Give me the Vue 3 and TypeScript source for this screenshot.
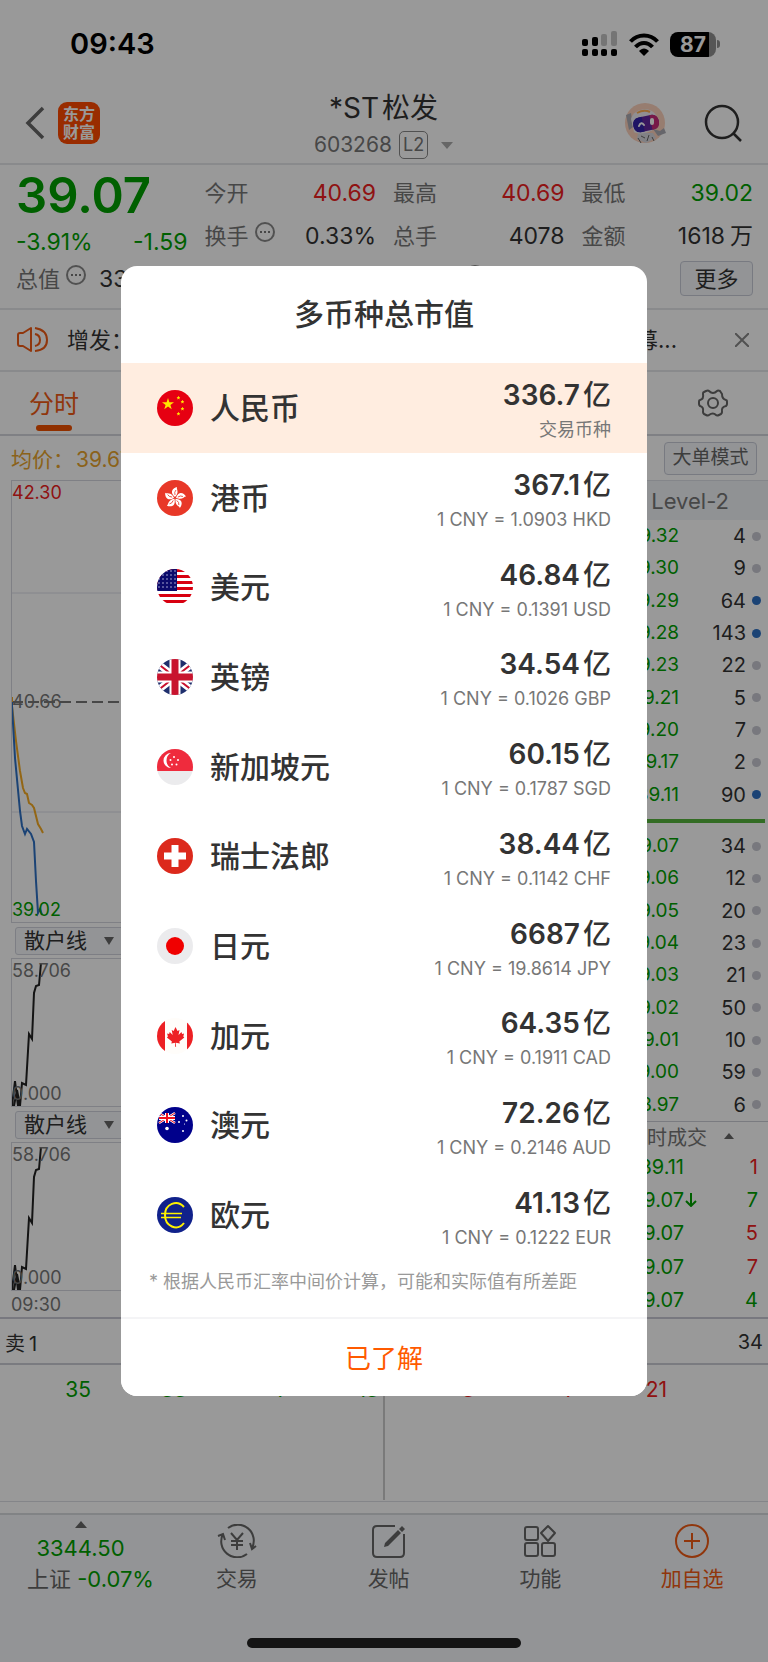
<script setup lang="ts">
interface Currency {
  code: string
  name: string
  value: string
  note: string
}
interface Level {
  price: string
  qty: number
  big?: boolean
}
interface Trade {
  price: string
  arrow?: boolean
  qty: number
  side: 'up' | 'down'
}

const currencies: Currency[] = [
  { code: 'CNY', name: '人民币', value: '336.7', note: '交易币种' },
  { code: 'HKD', name: '港币', value: '367.1', note: '1 CNY = 1.0903 HKD' },
  { code: 'USD', name: '美元', value: '46.84', note: '1 CNY = 0.1391 USD' },
  { code: 'GBP', name: '英镑', value: '34.54', note: '1 CNY = 0.1026 GBP' },
  { code: 'SGD', name: '新加坡元', value: '60.15', note: '1 CNY = 0.1787 SGD' },
  { code: 'CHF', name: '瑞士法郎', value: '38.44', note: '1 CNY = 0.1142 CHF' },
  { code: 'JPY', name: '日元', value: '6687', note: '1 CNY = 19.8614 JPY' },
  { code: 'CAD', name: '加元', value: '64.35', note: '1 CNY = 0.1911 CAD' },
  { code: 'AUD', name: '澳元', value: '72.26', note: '1 CNY = 0.2146 AUD' },
  { code: 'EUR', name: '欧元', value: '41.13', note: '1 CNY = 0.1222 EUR' },
]

const asks: Level[] = [
  { price: '39.32', qty: 4 },
  { price: '39.30', qty: 9 },
  { price: '39.29', qty: 64, big: true },
  { price: '39.28', qty: 143, big: true },
  { price: '39.23', qty: 22 },
  { price: '39.21', qty: 5 },
  { price: '39.20', qty: 7 },
  { price: '39.17', qty: 2 },
  { price: '39.11', qty: 90, big: true },
]
const bids: Level[] = [
  { price: '39.07', qty: 34 },
  { price: '39.06', qty: 12 },
  { price: '39.05', qty: 20 },
  { price: '39.04', qty: 23 },
  { price: '39.03', qty: 21 },
  { price: '39.02', qty: 50 },
  { price: '39.01', qty: 10 },
  { price: '39.00', qty: 59 },
  { price: '38.97', qty: 6 },
]
const books = [asks, bids]

const trades: Trade[] = [
  { price: '39.11', qty: 1, side: 'up' },
  { price: '39.07', arrow: true, qty: 7, side: 'down' },
  { price: '39.07', qty: 5, side: 'up' },
  { price: '39.07', qty: 7, side: 'up' },
  { price: '39.07', qty: 4, side: 'down' },
]

const queue = ['35', '33', '1', '13', '3', '1', '21', '']
const petals = [0, 72, 144, 216, 288]
const starRows = [2, 6, 10, 14, 18]
const starCols = [2, 6, 10, 14, 18]
const usStripes = [0, 6, 12, 18, 25, 31]
</script>

<template>
  <div class="app">
    <div class="page">
      <div class="status">
        <span class="clock">09:43</span>
        <div class="status-icons">
          <svg width="36" height="26" viewBox="0 0 36 26">
            <g fill="#000">
              <rect x="0" y="8" width="6" height="7" rx="2" /><rect x="10" y="6" width="6" height="9" rx="2" />
              <rect x="0" y="18" width="6" height="7" rx="2" /><rect x="10" y="18" width="6" height="7" rx="2" />
              <rect x="19" y="18" width="6" height="7" rx="2" /><rect x="29" y="18" width="6" height="7" rx="2" />
            </g>
            <g fill="#c4c4c4">
              <rect x="19" y="3" width="6" height="12" rx="2" /><rect x="29" y="0" width="6" height="15" rx="2" />
            </g>
          </svg>
          <svg width="30" height="23" viewBox="0 0 30 23" fill="none" stroke="#000" stroke-width="4">
            <path d="M1.500 8.500C9 .5 21 .5 28.500 8.500" /><path d="M6.500 14C11.500 8.500 18.500 8.500 23.500 14" />
            <path d="M10 18c3-3.500 7-3.500 10 0l-5 5z" fill="#000" stroke="none" />
          </svg>
          <div class="power"><div class="battery"><span>87</span></div><i class="nub" /></div>
        </div>
      </div>

      <header class="top">
        <div class="top-left">
          <button class="plain" aria-label="返回">
            <svg width="20" height="34" viewBox="0 0 20 34" fill="none" stroke="#666" stroke-width="3.500"><path d="M18 2 3 17l15 15" /></svg>
          </button>
          <div class="logo"><span>东方</span><span>财富</span></div>
        </div>
        <div class="top-title">
          <h1>*ST<span>松发</span></h1>
          <div class="code">
            <span>603268</span><span class="l2">L2</span>
            <svg width="12" height="7" viewBox="0 0 12 7"><path d="M0 0h12L6 7z" fill="#aaa" /></svg>
          </div>
        </div>
        <div class="top-right">
          <button class="plain" aria-label="助手">
            <svg width="42" height="42" viewBox="0 0 42 42">
              <circle cx="20" cy="21" r="20" fill="#fcd0bb" />
              <path d="M13 31h15l3 5-10 5-9-4z" fill="#d8d8de" />
              <path d="M16 34l4 2m4-3-2 6m-9-3 3 5m11-6 2 4" stroke="#666" stroke-width="1" />
              <path d="M1 13l5-2 2 14-4 3zM28 27l7 2 4-3 2 5-8 3z" fill="#aaaab2" />
              <path d="M6 17C8 7 25 3 31 13l2 8c0 8-18 13-24 9z" fill="#f0eff3" />
              <path d="M12 11q7-4 13-1" fill="none" stroke="#ffb052" stroke-width="2" />
              <g transform="rotate(-12 21 21)">
                <rect x="8" y="14" width="26" height="15" rx="7" fill="#62259e" />
                <path d="M15 14h3v15h-3q-7 0-7-7.500T15 14z" fill="#3222a8" /><path d="M26 14h1q7 0 7 7.500T27 29h-1z" fill="#c62878" />
              </g>
              <path d="M14 24q2-5 5-1" fill="none" stroke="#fff" stroke-width="2" stroke-linecap="round" />
              <rect x="25" y="16" width="4" height="7" rx="2" fill="#fff" />
            </svg>
          </button>
          <button class="plain" aria-label="搜索">
            <svg width="38" height="38" viewBox="0 0 38 38" fill="none" stroke="#333" stroke-width="2.500"><circle cx="18" cy="18" r="16" /><path d="M29 29l8 8" /></svg>
          </button>
        </div>
      </header>

      <section class="quote">
        <div class="price">
          <strong>39.07</strong>
          <div class="change"><span>-3.91%</span><span>-1.59</span></div>
        </div>
        <div class="cell"><span class="label">今开</span><span class="up">40.69</span></div>
        <div class="cell"><span class="label">最高</span><span class="up">40.69</span></div>
        <div class="cell"><span class="label">最低</span><span class="down">39.02</span></div>
        <div class="cell">
          <span class="label">换手<i class="more-dot"><b /><b /><b /></i></span><span>0.33%</span>
        </div>
        <div class="cell"><span class="label">总手</span><span>4078</span></div>
        <div class="cell"><span class="label">金额</span><span class="unit">1618<em>万</em></span></div>
        <div class="cell cap">
          <span class="label">总值<i class="more-dot"><b /><b /><b /></i></span><span>336.7亿</span>
        </div>
        <div class="cell third"><span class="label">市盈动<i class="more-dot"><b /><b /><b /></i></span></div>
        <div class="cell last"><button class="chip">更多</button></div>
      </section>

      <section class="news">
        <svg width="32" height="28" viewBox="0 0 32 28" fill="none" stroke="#f05a14" stroke-width="2" stroke-linejoin="round">
          <path d="M14 2v23L6 20H3q-2 0-2-2V9q0-2 2-2h3z" /><path d="M18 8q5 1 5 6t-5 6M18 2q12 2 12 12T18 25" />
        </svg>
        <div class="news-text"><span>增发：</span><span>募...</span></div>
        <button class="plain" aria-label="关闭">
          <svg width="14" height="14" viewBox="0 0 14 14" stroke="#888" stroke-width="2"><path d="M0 0l14 14M14 0 0 14" /></svg>
        </button>
      </section>

      <nav class="tabs">
        <button class="plain tab">分时</button>
        <button class="plain" aria-label="设置">
          <svg width="30" height="30" viewBox="0 0 30 30" fill="none" stroke="#666" stroke-width="2" stroke-linejoin="round">
            <path d="M8 3q2-1 3 0 4 4 8 0 1-1 3 0l2 3q0 5 4 6 1 0 1 2v2q0 1-1 2-5 1-4 6 0 1-1 2l-2 1q-2 1-3 0-3-3-7 0-1 1-3 0l-2-1q-1-1-1-2 1-5-3-6-1-1-1-2v-2q0-2 1-2 4-1 3-6 0-2 1-2z" /><circle cx="15" cy="15" r="5" />
          </svg>
        </button>
      </nav>

      <section class="average">
        <div class="avg-text"><span>均价：</span><span>39.67</span></div>
        <button class="chip small">大单模式</button>
      </section>

      <section class="market">
        <div class="charts">
          <div class="chart main-chart">
            <svg width="100%" height="100%" fill="none">
              <g stroke="#dcdfe8" stroke-width="1"><line x1="0" x2="100%" y1="112" y2="112" /><line x1="0" x2="100%" y1="331" y2="331" /></g>
              <line x1="0" x2="100%" y1="221" y2="221" stroke="#777" stroke-width="2" stroke-dasharray="11 5" />
              <path d="M0 216v9l4 35 4 30 3 17 2 5 2 1 2 9 3 2 2 3 4 16 3 5 2 4" stroke="#f5ab23" stroke-width="2" />
              <path d="M0 221v4l3 52 5 53 2 15 3 8 2-5 4 5 3 8 2 39 2 32 2-4 2 6" stroke="#2d70c4" stroke-width="2" />
            </svg>
            <span class="tag hi">42.30</span><span class="tag mid">40.66</span><span class="tag lo">39.02</span>
          </div>
          <template v-for="n in 2" :key="n">
            <button class="indicator"><span>散户线</span><svg width="10" height="8" viewBox="0 0 10 8"><path d="M0 0h10L5 8z" fill="#666" /></svg></button>
            <div class="chart sub-chart">
              <svg width="100%" height="100%" fill="none" stroke="#222" stroke-width="2">
                <path d="M0 147l3-25 3 25h2l2-23 4 2 3-51 3 5 2-46 2-7 3-1 2-22M2 147l3-16 3 16" />
              </svg>
              <span class="tag hi">58.706</span><span class="tag lo">0.000</span>
            </div>
          </template>
          <div class="axis">09:30</div>
        </div>

        <div class="book">
          <div class="book-head">Level-2</div>
          <template v-for="(levels, b) in books" :key="b">
            <div v-if="b === 1" class="split" />
            <table class="levels">
              <tbody>
                <tr v-for="l in levels" :key="l.price">
                  <td class="down">{{ l.price }}</td><td class="qty">{{ l.qty }}</td>
                  <td class="dot-cell"><i class="dot" :class="{ big: l.big }" /></td>
                </tr>
              </tbody>
            </table>
          </template>
          <div class="trade-head"><span>分时成交</span><svg width="10" height="6" viewBox="0 0 10 6"><path d="M5 0l5 6H0z" fill="#666" /></svg></div>
          <table class="trades">
            <tbody>
              <tr v-for="(t, i) in trades" :key="i">
                <td class="down">{{ t.price }}</td>
                <td class="arrow"><svg v-if="t.arrow" width="12" height="14" viewBox="0 0 12 14" fill="none" stroke="#00a000" stroke-width="2"><path d="M6 0v13M1 8l5 5 5-5" /></svg></td>
                <td class="qty" :class="t.side">{{ t.qty }}</td>
              </tr>
            </tbody>
          </table>
        </div>
      </section>

      <section class="sell"><span>卖<em>1</em></span><span>34</span></section>
      <section class="queue">
        <span v-for="(q, i) in queue" :key="i" :class="i < 4 ? 'down' : 'up'">{{ q }}</span>
      </section>

      <footer class="dock">
        <div class="dock-items">
          <button class="plain index">
            <svg width="12" height="7" viewBox="0 0 12 7"><path d="M6 0l6 7H0z" fill="#666" /></svg>
            <span class="down">3344.50</span>
            <span class="index-name">上证 <span class="down">-0.07%</span></span>
          </button>
          <button class="plain item">
            <svg width="40" height="34" viewBox="0 0 40 34" fill="none" stroke="#666" stroke-width="2">
              <path d="M11 4A16 16 0 0 1 35 24M30 30A16 16 0 0 1 6 10M1 12l5-2 2 6M39 22l-4 3-2-6M14 9l6 7 6-7M20 16v10M14 17h12M14 21h12" />
            </svg>
            <span>交易</span>
          </button>
          <button class="plain item">
            <svg width="34" height="34" viewBox="0 0 34 34" fill="none" stroke="#666" stroke-width="2">
              <path d="M23 2H5Q1 2 1 6v23q0 4 4 4h23q4 0 4-4V10" /><path d="M12 23l4-1L29 9l-3-3-13 13zM27 5l3 3 3-3-3-3z" fill="#666" stroke="none" />
            </svg>
            <span>发帖</span>
          </button>
          <button class="plain item">
            <svg width="34" height="34" viewBox="0 0 34 34" fill="none" stroke="#666" stroke-width="2" stroke-linejoin="round">
              <rect x="2" y="3" width="13" height="13" rx="2" /><rect x="2" y="19" width="13" height="13" rx="2" /><rect x="19" y="19" width="13" height="13" rx="2" /><path d="M25 2l7 7-7 8-7-8z" />
            </svg>
            <span>功能</span>
          </button>
          <button class="plain item add">
            <svg width="34" height="34" viewBox="0 0 34 34" fill="none" stroke="#f05a14" stroke-width="2"><circle cx="17" cy="17" r="16" /><path d="M17 9v16M9 17h16" /></svg>
            <span>加自选</span>
          </button>
        </div>
        <div class="home-bar" />
      </footer>
    </div>

    <div class="overlay">
      <div class="modal" role="dialog" aria-labelledby="modal-title">
        <h2 id="modal-title">多币种总市值</h2>
        <ul class="currencies">
          <li v-for="(c, i) in currencies" :key="c.code" :class="{ active: i === 0 }">
            <svg class="flag" width="36" height="36" viewBox="0 0 36 36">
              <g v-if="c.code === 'CNY'">
                <rect width="36" height="36" fill="#e60012" />
                <g fill="#ffe600">
                  <path d="M11 8l1.400 4.200h4.600l-3.600 2.700 1.300 4.300-3.700-2.600-3.700 2.600 1.300-4.300L5 12.200h4.600z" />
                  <path id="cn-star" d="M21.500 5.800l.6 1.200 1.200.2-.9.900.2 1.300-1.100-.6-1.200.6.200-1.300-.9-.9 1.300-.2z" />
                  <use href="#cn-star" x="4" y="4" /><use href="#cn-star" x="4" y="11" /><use href="#cn-star" y="16" />
                </g>
              </g>
              <g v-else-if="c.code === 'HKD'">
                <rect width="36" height="36" fill="#e83828" />
                <g v-for="a in petals" :key="a" :transform="`rotate(${a} 18 18)`">
                  <path d="M18 17C12 12 16 8 20 7c-1 2 3 5-2 10z" fill="#fff" /><path d="M18 15q-1-3 1-5" fill="none" stroke="#e83828" stroke-width=".8" />
                </g>
              </g>
              <g v-else-if="c.code === 'USD'">
                <rect width="36" height="36" fill="#fff" />
                <rect v-for="y in usStripes" :key="y" :y="y" width="36" height="3" fill="#d80010" />
                <rect width="20" height="22" fill="#0b0a6b" />
                <template v-for="y in starRows" :key="y"><circle v-for="x in starCols" :key="x" :cx="x" :cy="y + (x % 4 ? 0 : 2)" r=".7" fill="#dcdcf4" /></template>
              </g>
              <g v-else-if="c.code === 'GBP'">
                <rect width="36" height="36" fill="#1f2f6d" />
                <path d="M0 4l36 28M36 4L0 32" stroke="#fff" stroke-width="7" /><path d="M0 4l36 28M36 4L0 32" stroke="#c8102e" stroke-width="2" />
                <path d="M18 0v36M0 18h36" stroke="#fff" stroke-width="11" /><path d="M18 0v36M0 18h36" stroke="#c8142e" stroke-width="7" />
              </g>
              <g v-else-if="c.code === 'SGD'">
                <rect width="36" height="36" fill="#ebebed" /><rect width="36" height="22" fill="#ef2b3d" />
                <path d="M14 4a7.500 7.500 0 1 0 0 15 8.500 8.500 0 0 1 0-15z" fill="#fff" />
                <g fill="#fff"><circle cx="17" cy="8" r="1" /><circle cx="13.500" cy="11" r="1" /><circle cx="21" cy="11" r="1" /><circle cx="15" cy="15.500" r="1" /><circle cx="19.500" cy="15.500" r="1" /></g>
              </g>
              <g v-else-if="c.code === 'CHF'">
                <rect width="36" height="36" fill="#dc291c" /><path d="M18 7v22M7 18h22" stroke="#fff" stroke-width="7" />
              </g>
              <g v-else-if="c.code === 'JPY'"><rect width="36" height="36" fill="#ebebed" /><circle cx="18" cy="18" r="9" fill="#f00000" /></g>
              <g v-else-if="c.code === 'CAD'">
                <rect width="36" height="36" fill="#fffdfa" /><rect width="8" height="36" fill="#ed2024" /><rect x="30" width="6" height="36" fill="#ed2024" />
                <path d="M18.500 9l2 4 2-1-1 5 3-3 .6 2 2-.4-.8 3 1 .8-5 4 .6 2-4-.6.200 4h-1l.200-4-4 .6.600-2-5-4 1-.8-.8-3 2 .4.600-2 3 3-1-5 2 1z" fill="#ed2024" />
              </g>
              <g v-else-if="c.code === 'AUD'">
                <rect width="36" height="36" fill="#00008b" />
                <path d="M2 6l16 10M18 6L2 16" stroke="#fff" stroke-width="2.500" /><path d="M2 6l16 10M18 6L2 16" stroke="#f01020" stroke-width="1" />
                <path d="M10 6v10M2 11h16" stroke="#fff" stroke-width="4" /><path d="M10 6v10M2 11h16" stroke="#f01020" stroke-width="2" />
                <g fill="#fff"><circle cx="10" cy="21.500" r="1.800" /><circle cx="26" cy="9" r="1" /><circle cx="22" cy="15" r="1" /><circle cx="29.500" cy="13.500" r="1" /><circle cx="27.500" cy="17" r=".6" /><circle cx="26" cy="24" r="1" /></g>
              </g>
              <g v-else>
                <rect width="36" height="36" fill="#10218b" />
                <path d="M27 10C20 2 8 7 8 18s12 17 19 8" fill="none" stroke="#fff200" stroke-width="2" /><path d="M4 16.500h21M4 20.500h20" stroke="#fff200" stroke-width="1.600" />
              </g>
            </svg>
            <span class="name">{{ c.name }}</span>
            <div class="amount">
              <strong>{{ c.value }}<em>亿</em></strong>
              <small>{{ c.note }}</small>
            </div>
          </li>
        </ul>
        <p class="foot-note">* 根据人民币汇率中间价计算，可能和实际值有所差距</p>
        <button class="confirm">已了解</button>
      </div>
    </div>
  </div>
</template>

<style>
body { margin: 0; }
</style>

<style scoped>
.app { position: relative; font-family: Inter, "Noto Sans CJK SC", sans-serif; color: #333; }
.app * { box-sizing: border-box; }
.page { display: flex; flex-direction: column; min-height: 100vh; background: #fff; overflow: hidden; }
button { font-family: inherit; cursor: pointer; color: inherit; }
.plain { border: 0; background: none; padding: 0; display: flex; align-items: center; }
svg { display: block; }
em { font-style: normal; }
.up { color: #ee2020; }
.down { color: #00a000; }

.status { height: 88px; display: flex; align-items: center; justify-content: space-between; padding: 0 48px 0 70px; color: #000; }
.clock { font-size: 29px; font-weight: 600; line-height: 36px; }
.status-icons { display: flex; align-items: center; gap: 11px; }
.power { display: flex; align-items: center; gap: 1px; }
.battery { display: flex; align-items: center; justify-content: center; width: 46px; height: 25px; border-radius: 8px; background: linear-gradient(90deg, #000 39px, #909090 39px); color: #fff; font-size: 21px; font-weight: 700; line-height: 25px; }
.nub { width: 3px; height: 8px; border-radius: 0 3px 3px 0; background: #909090; }

.top { height: 77px; border-bottom: 2px solid #e4e6ea; display: grid; grid-template-columns: 1fr auto 1fr; align-items: start; padding: 0 26px 0 25px; }
.top-left { height: 70px; display: flex; align-items: center; gap: 13px; }
.top-right { height: 70px; display: flex; align-items: center; justify-content: flex-end; gap: 37px; }
.logo { width: 42px; height: 42px; border-radius: 9px; background: #ff4a00; color: #fff; display: flex; flex-direction: column; align-items: center; justify-content: center; font-size: 16px; font-weight: 700; line-height: 18px; }
.top-title { display: flex; flex-direction: column; align-items: center; padding-top: 2px; }
h1 { margin: 0; font-size: 28px; font-weight: 400; line-height: 37px; display: flex; gap: 3px; }
.code { display: flex; align-items: center; gap: 7px; font-size: 21px; line-height: 36px; color: #777; }
.l2 { border: 1px solid #888; border-radius: 5px; font-size: 18px; line-height: 26px; padding: 0 3px; margin-right: 6px; }

.quote { display: grid; grid-template-columns: repeat(4, 1fr); grid-auto-rows: 43px; column-gap: 17px; padding: 6px 15px 8px 16px; border-bottom: 2px solid #e4e6ea; font-size: 23px; line-height: 30px; }
.price { grid-row: span 2; color: #00a000; }
.price strong { display: block; font-size: 49px; font-weight: 600; line-height: 50px; margin-bottom: 6px; }
.change { display: flex; justify-content: space-between; }
.cell { display: flex; align-items: center; justify-content: space-between; }
.label { color: #777; font-size: 22px; display: flex; align-items: center; gap: 6px; }
.unit { display: flex; gap: 5px; }
.cap { justify-content: flex-start; gap: 13px; }
.third { grid-column: 3; }
.last { justify-content: flex-end; }
.more-dot { width: 20px; height: 20px; border: 2px solid #888; border-radius: 50%; display: flex; align-items: center; justify-content: center; gap: 2px; margin-bottom: 8px; }
.more-dot b { width: 2px; height: 2px; background: #777; }
.chip { border: 1px solid #c8ccd8; border-radius: 4px; background: #f5f7fa; width: 73px; height: 35px; padding: 0; font-size: 22px; line-height: 30px; }
.small { width: 93px; height: 33px; font-size: 19px; color: #666; }

.news { height: 62px; display: flex; align-items: center; padding: 0 19px 0 17px; gap: 18px; border-bottom: 2px solid #e4e6ea; font-size: 22px; }
.news-text { flex: 1; display: flex; justify-content: space-between; margin-right: 40px; line-height: 30px; }
.tabs { height: 64px; display: flex; align-items: center; justify-content: space-between; padding: 0 40px 0 29px; border-bottom: 2px solid #d4d6dc; }
.tab { flex-direction: column; gap: 4px; padding-top: 11px; font-size: 25px; line-height: 34px; color: #f05a14; }
.tab::after { content: ""; width: 36px; height: 6px; border-radius: 3px; background: #f05000; }
.average { height: 44px; display: flex; align-items: center; justify-content: space-between; padding: 0 11px; font-size: 21px; color: #e8a32c; }
.avg-text { display: flex; align-items: baseline; gap: 2px; }

.market { display: grid; grid-template-columns: 1fr 250px; border-bottom: 2px solid #c8c9d4; }
.charts { padding-left: 11px; }
.chart { position: relative; border: 1px solid #d4d6de; }
.main-chart { height: 443px; }
.sub-chart { height: 149px; }
.tag { position: absolute; left: 0; font-size: 18px; line-height: 22px; color: #777; }
.hi { top: 1px; }
.mid { top: 210px; }
.lo { bottom: 1px; }
.main-chart .hi { color: #ee2020; }
.main-chart .lo { color: #00a000; }
.indicator { display: flex; align-items: center; gap: 17px; width: 130px; height: 28px; margin: 4px 0 3px 4px; padding: 0 8px; border: 1px solid #d0d3dc; border-radius: 3px; background: #f5f7fa; font-size: 21px; line-height: 26px; white-space: nowrap; }
.axis { font-size: 18px; line-height: 24px; color: #777; padding-top: 2px; }

.book-head { height: 40px; background: #f0f3f7; border-top: 1px solid #dde0e6; padding-right: 39px; text-align: right; font-size: 22px; line-height: 40px; color: #777; }
table { width: 100%; border-collapse: collapse; font-size: 19px; line-height: 24px; }
td { padding: 0; text-align: right; }
td:first-child { width: 161px; }
.levels { height: 291px; }
.levels .qty { font-size: 20px; }
.dot-cell { width: 22px; padding-right: 7px; }
.dot { display: block; width: 9px; height: 9px; border-radius: 50%; background: #c8c9d2; margin-left: auto; }
.dot.big { background: #2d70c4; }
.split { height: 4px; margin: 8px 3px 7px 0; background: #56b43c; }
.trade-head { display: flex; align-items: center; justify-content: flex-end; gap: 17px; height: 29px; padding-right: 34px; border-top: 1px solid #ccced6; font-size: 20px; color: #777; }
.trades { height: 167px; font-size: 20px; }
.trades td:first-child { width: 166px; }
.trades .arrow { width: 14px; padding-left: 1px; }
.trades .qty { padding-right: 10px; }

.sell { height: 46px; display: flex; align-items: center; justify-content: space-between; padding: 2px 5px 0; border-bottom: 2px solid #ccced6; font-size: 20px; }
.sell em { margin-left: 4px; }
.queue { height: 137px; display: grid; grid-template-columns: repeat(8, 1fr); padding-top: 11px; font-size: 21px; line-height: 28px; text-align: right; border-bottom: 1px solid #dcdee4; background: linear-gradient(#ccc, #ccc) 50% 0 / 2px 135px no-repeat; }
.queue span { padding-right: 5px; }

.dock { flex: 1; margin-top: 11px; background: #f5f7fa; border-top: 2px solid #d8dade; padding-bottom: 14px; color: #666; }
.dock-items { display: grid; grid-template-columns: 161px repeat(4, 1fr); height: 123px; align-items: start; font-size: 21px; line-height: 30px; }
.index { flex-direction: column; padding-top: 6px; font-size: 22px; line-height: 31px; }
.index svg { margin-bottom: 5px; }
.index-name { padding-left: 20px; font-size: 22px; }
.dock-items > .item { flex-direction: column; padding-top: 9px; gap: 4px; }
.item span { font-size: 21px; }
.add { color: #f05a14; }
.home-bar { width: 274px; height: 10px; border-radius: 5px; background: #222; margin: 0 auto; }

.overlay { position: absolute; inset: 0; display: grid; place-items: center; background: rgba(0, 0, 0, .4); }
.modal { width: min(526px, 90%); background: #fff; border-radius: 16px; overflow: hidden; display: flex; flex-direction: column; }
h2 { margin: 0; font-size: 30px; font-weight: 500; line-height: 97px; text-align: center; }
.currencies { margin: 0; padding: 0; list-style: none; display: grid; grid-auto-rows: 1fr; height: 897px; }
.currencies li { display: flex; align-items: center; padding: 0 36px; }
.currencies .active { background: #ffede0; }
.flag { border-radius: 50%; flex: none; }
.name { margin-left: 17px; font-size: 30px; font-weight: 500; line-height: 40px; }
.amount { margin-left: auto; padding-top: 7px; display: flex; flex-direction: column; align-items: flex-end; }
.amount strong { display: flex; align-items: baseline; gap: 3px; font-size: 28px; font-weight: 600; line-height: 38px; }
.amount em { font-weight: 500; }
.amount small { font-size: 18px; line-height: 32px; color: #777; }
.foot-note { margin: 0; padding: 8px 28px 21px; font-size: 18px; line-height: 28px; color: #999; }
.confirm { border: 0; border-top: 2px solid #f4f4f6; background: #fff; height: 79px; padding: 0 0 3px; font-size: 26px; color: #ff5a00; }
</style>
